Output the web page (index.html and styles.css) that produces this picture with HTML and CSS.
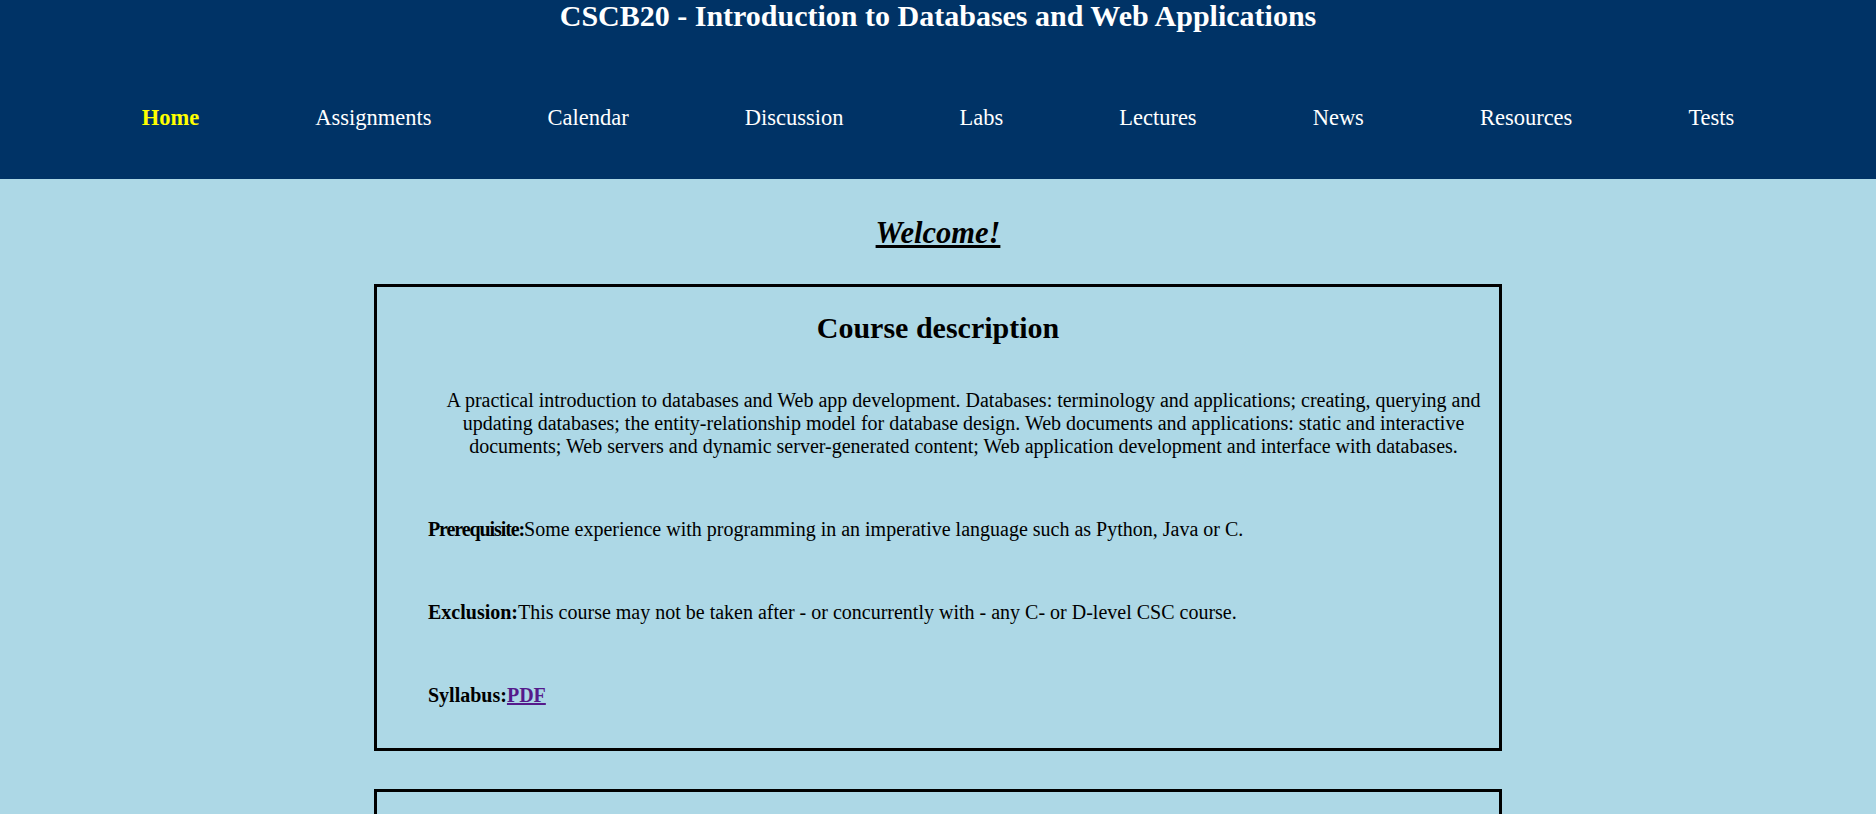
FILE: index.html
```html
<!DOCTYPE html>
<html>
<head>
<meta charset="utf-8">
<title>CSCB20</title>
<link rel="stylesheet" href="styles.css">
</head>
<body>
<header class="header">
  <h1 class="title">CSCB20 - Introduction to Databases and Web Applications</h1>
  <nav class="nav">
    <a class="nav-link active" href="#">Home</a>
    <a class="nav-link" href="#">Assignments</a>
    <a class="nav-link" href="#">Calendar</a>
    <a class="nav-link" href="#">Discussion</a>
    <a class="nav-link" href="#">Labs</a>
    <a class="nav-link" href="#">Lectures</a>
    <a class="nav-link" href="#">News</a>
    <a class="nav-link" href="#">Resources</a>
    <a class="nav-link" href="#">Tests</a>
  </nav>
</header>
<main class="main">
  <h2 class="welcome">Welcome!</h2>
  <section class="box">
    <h2 class="box-title">Course description</h2>
    <div class="box-body">
      <p class="desc">A practical introduction to databases and Web app development. Databases: terminology and applications; creating, querying and updating databases; the entity-relationship model for database design. Web documents and applications: static and interactive documents; Web servers and dynamic server-generated content; Web application development and interface with databases.</p>
      <p class="item"><b class="tight">Prerequisite:</b>Some experience with programming in an imperative language such as Python, Java or C.</p>
      <p class="item"><b>Exclusion:</b>This course may not be taken after - or concurrently with - any C- or D-level CSC course.</p>
      <p class="item"><b>Syllabus:</b><a class="pdf" href="#"><b>PDF</b></a></p>
    </div>
  </section>
  <section class="box box-next"></section>
</main>
</body>
</html>
```

FILE: styles.css
```css
html, body {
  margin: 0;
  padding: 0;
}
body {
  background: #add8e6;
  font-family: "Liberation Serif", "Times New Roman", serif;
  color: #000;
  overflow: hidden;
}
.header {
  background: #003366;
  height: 179px;
}
.title {
  margin: 0;
  font-size: 30px;
  line-height: 32px;
  text-align: center;
  color: #fff;
  font-weight: bold;
}
.nav {
  display: flex;
  justify-content: center;
  gap: 116px;
  margin-top: 73px;
}
.nav-link {
  color: #fff;
  text-decoration: none;
  font-size: 22.5px;
  line-height: 26px;
}
.nav-link.active {
  color: #ffff00;
  font-weight: bold;
}
.main {
  padding-top: 37px;
}
.welcome {
  margin: 0;
  text-align: center;
  font-size: 30.5px;
  line-height: 34px;
  font-style: italic;
  font-weight: bold;
  text-decoration: underline;
}
.box {
  box-sizing: border-box;
  width: 1128px;
  margin: 34px auto 0;
  border: 3px solid #000;
}
.box-title {
  margin: 24px 0 0;
  text-align: center;
  font-size: 30px;
  line-height: 34px;
  font-weight: bold;
}
.box-body {
  padding: 0 0 41px 51px;
  font-size: 20px;
  line-height: 23px;
}
.desc {
  margin: 44px 0 0;
  text-align: center;
}
.item {
  margin: 60px 0 0;
}
.tight {
  letter-spacing: -1.1px;
}
.pdf {
  color: #551a8b;
  text-decoration: underline;
}
.box-next {
  margin-top: 38px;
  height: 120px;
}
```
